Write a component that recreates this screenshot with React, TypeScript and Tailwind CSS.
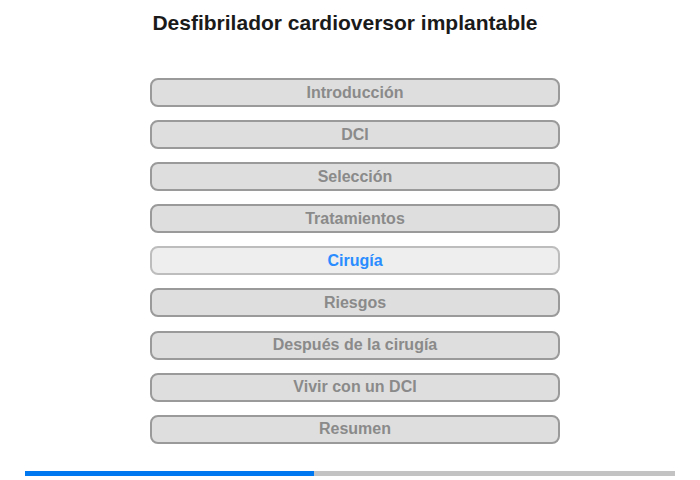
import React from "react";

const items = [
  "Introducción",
  "DCI",
  "Selección",
  "Tratamientos",
  "Cirugía",
  "Riesgos",
  "Después de la cirugía",
  "Vivir con un DCI",
  "Resumen",
];

export default function App() {
  return (
    <div
      className="w-[700px] h-[480px] bg-white flex flex-col"
      style={{ fontFamily: '"Liberation Sans", Arial, sans-serif' }}
    >
      <h1 className="mt-[10px] h-[26px] pr-[10px] text-center text-[21px] leading-[26px] font-bold text-[#1a1a1a]">
        Desfibrilador cardioversor implantable
      </h1>
      <div className="mt-[42px] ml-[150px] flex flex-col gap-[13.1px] w-[410px]">
        {items.map((t) => {
          const active = t === "Cirugía";
          return (
            <div
              key={t}
              className={
                active
                  ? "h-[29px] rounded-[8px] border-2 border-[#bdbdbd] bg-[#eeeeee] flex items-center justify-center text-[16px] font-bold text-[#2a8cff]"
                  : "h-[29px] rounded-[8px] border-2 border-[#9a9a9a] bg-[#dedede] flex items-center justify-center text-[16px] font-bold text-[#8a8a8a]"
              }
            >
              {t}
            </div>
          );
        })}
      </div>
      <div className="mt-[27px] ml-[25px] w-[650px] h-[5px] bg-[#c3c3c3] flex">
        <div className="w-[289px] h-full bg-[#0078f0]" />
      </div>
    </div>
  );
}
